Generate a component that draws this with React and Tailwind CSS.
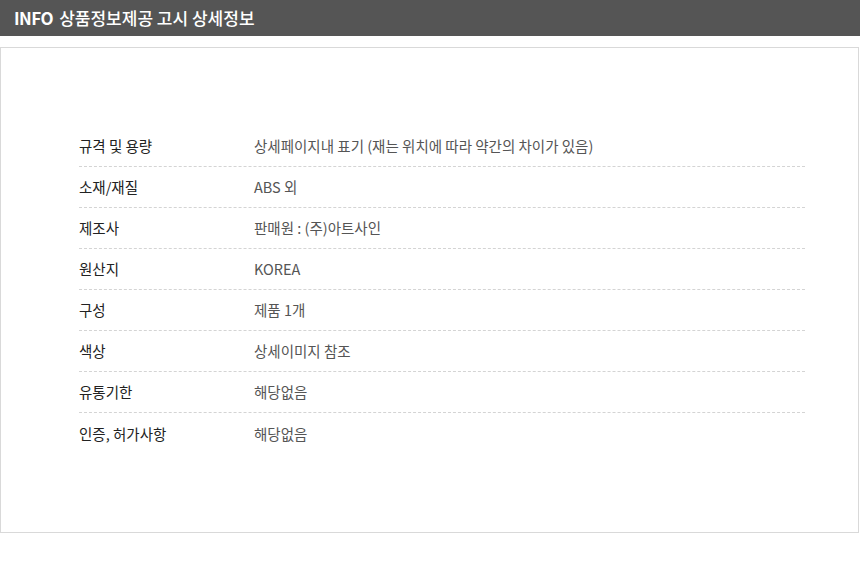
// App.jsx
const rows = [
  ["규격 및 용량", "상세페이지내 표기 (재는 위치에 따라 약간의 차이가 있음)"],
  ["소재/재질", "ABS 외"],
  ["제조사", "판매원 : (주)아트사인"],
  ["원산지", "KOREA"],
  ["구성", "제품 1개"],
  ["색상", "상세이미지 참조"],
  ["유통기한", "해당없음"],
  ["인증, 허가사항", "해당없음"],
];

const App = () => {
  return (
    <div
      className="w-[860px] h-[562px] bg-white"
      style={{ fontFamily: '"Noto Sans CJK KR", "Noto Sans", sans-serif' }}
    >
      <div className="h-[36px] bg-[#555555] flex items-center pl-[14px] text-white text-[17px]">
        <span className="font-bold tracking-[-0.5px]">INFO</span>
        <span className="ml-[6px] font-medium">상품정보제공 고시 상세정보</span>
      </div>

      <div className="mt-[11px] w-[859px] h-[486px] border border-[#d9d9d9] pt-[78px] pl-[78px]">
        <div className="w-[726px]">
          {rows.map(([label, value], i) => (
            <div
              key={label}
              className={
                i < rows.length - 1
                  ? "h-[41px] flex items-center border-b border-dashed border-[#d4d4d4]"
                  : "h-[41px] flex items-center"
              }
            >
              <div className="w-[175px] text-[14.5px] text-[#222]">{label}</div>
              <div className="text-[14.5px] text-[#555]">{value}</div>
            </div>
          ))}
        </div>
      </div>
    </div>
  );
};

export default App;
